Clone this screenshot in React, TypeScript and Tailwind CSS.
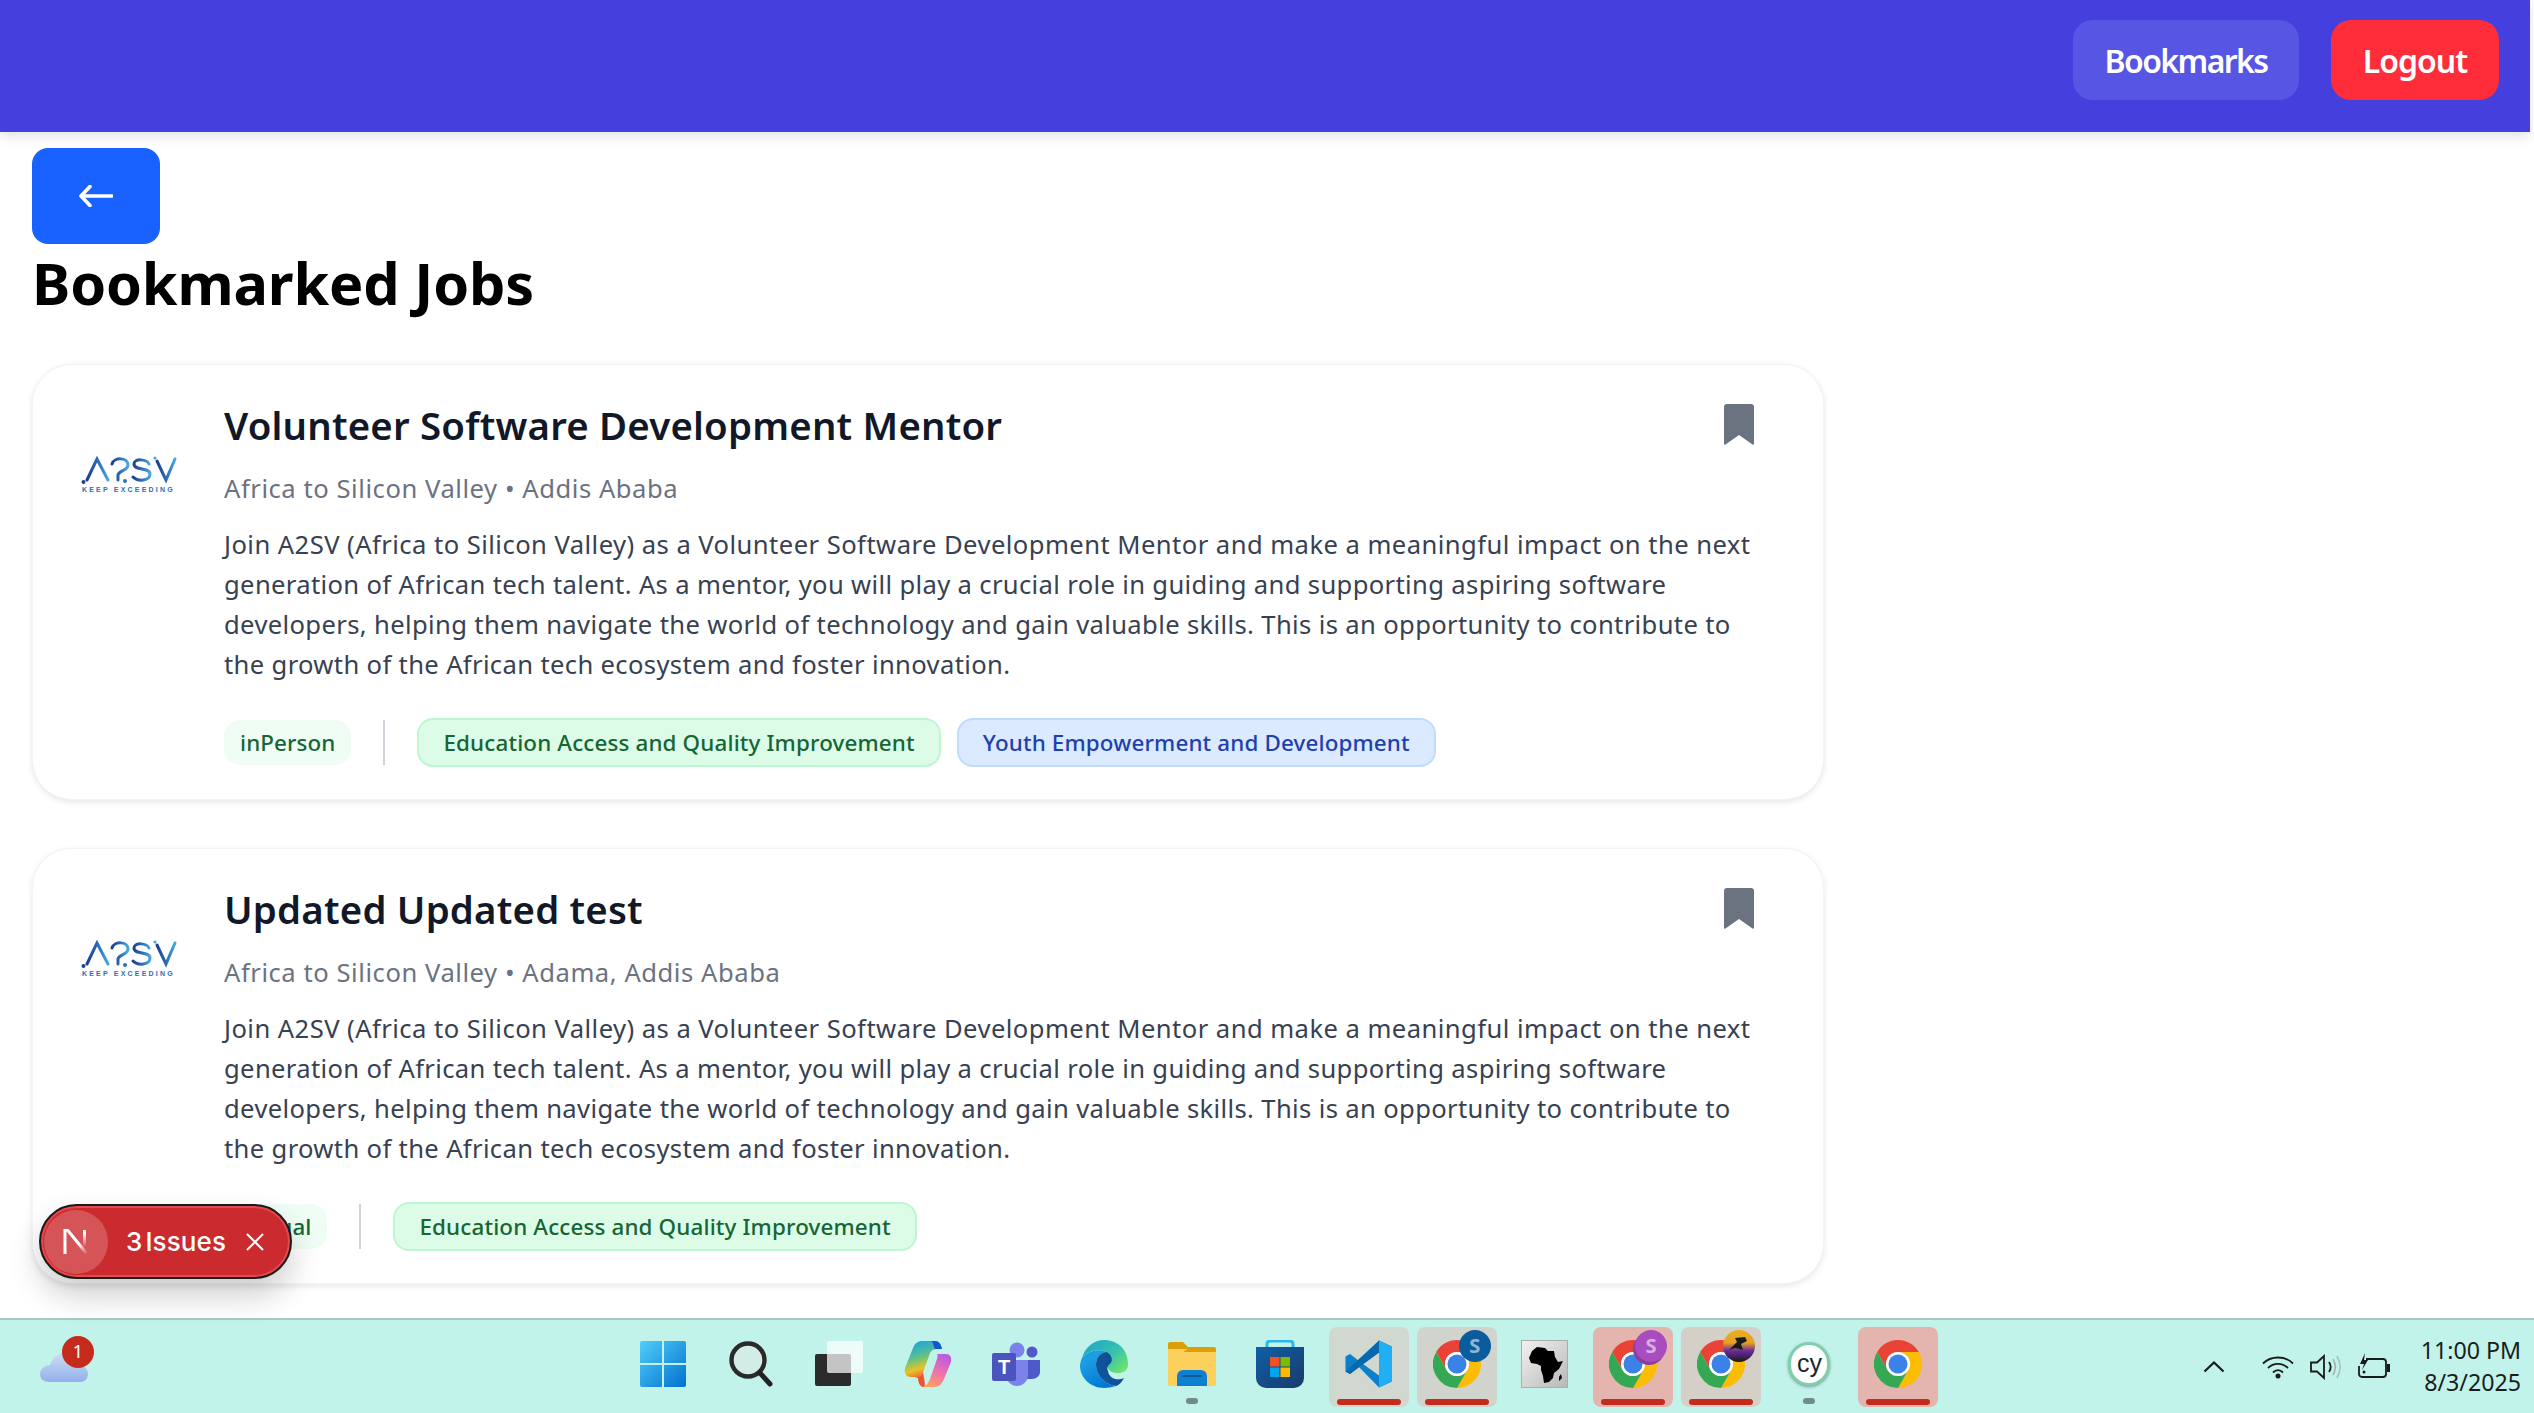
import React from "react";

const bodyLines = [
  { text: "Join A2SV (Africa to Silicon Valley) as a Volunteer Software Development Mentor and make a meaningful impact on the next", cls: "whitespace-nowrap tracking-[0.45px]" },
  { text: "generation of African tech talent. As a mentor, you will play a crucial role in guiding and supporting aspiring software", cls: "whitespace-nowrap tracking-[0.35px]" },
  { text: "developers, helping them navigate the world of technology and gain valuable skills. This is an opportunity to contribute to", cls: "whitespace-nowrap tracking-[0.36px]" },
  { text: "the growth of the African tech ecosystem and foster innovation.", cls: "whitespace-nowrap tracking-[0.35px]" },
];

function Logo({ id }: { id: string }) {
  return (
    <svg width="96" height="38" viewBox="0 0 96 38" aria-label="A2SV logo">
      <defs>
        <linearGradient id={id} x1="0" x2="1" y1="0" y2="0">
          <stop offset="0" stopColor="#1c3f8f" />
          <stop offset="0.55" stopColor="#2d6fb8" />
          <stop offset="1" stopColor="#45a8e4" />
        </linearGradient>
      </defs>
      <g fill="none" stroke={`url(#${id})`} strokeWidth="3" strokeLinecap="round">
        <path d="M6 24 L16 3 L27 24" />
        <path d="M31 8 C33 1 47 1 47 9 C47 15 38 14 37 19 L37 24" />
        <path d="M68 8 C66 3 53 2 53 8 C53 15 69 11 69 18 C69 25 57 26 52 21" />
        <path d="M76 5 L85 24 L94 3" />
      </g>
      <circle cx="2.5" cy="26" r="2" fill="#1c3f8f" />
      <circle cx="44" cy="25" r="2" fill="#2d6fb8" />
      <circle cx="74" cy="2" r="1.600" fill="#45a8e4" />
      <text x="1" y="36" fontSize="7" fontWeight="700" letterSpacing="1.4" fill="#2f6db5" fontFamily="Liberation Sans, sans-serif" textLength="92">KEEP EXCEEDING</text>
    </svg>
  );
}

function Bookmark() {
  return (
    <svg width="30" height="41" viewBox="0 0 30 41" className="mt-[3px] mr-[5px] shrink-0">
      <path d="M3 0h24A3 3 0 0 1 30 3V39.500A1 1 0 0 1 28.500 40.500L15 31 1.500 40.500A1 1 0 0 1 0 39.500V3A3 3 0 0 1 3 0Z" fill="#6b7280" />
    </svg>
  );
}

function Card({ id, title, meta, mode, tags }: { id: string; title: string; meta: string; mode: string; tags: { label: string; blue?: boolean }[] }) {
  return (
    <div className="flex rounded-[40px] border border-[#f3f4f6] bg-white pl-[32px] pr-[64px] pt-[36px] pb-[32px] shadow-[0_2px_6px_rgba(0,0,0,0.10)]">
      <div className="mt-[55px] flex h-[38px] w-[128px] shrink-0 justify-center">
        <Logo id={id} />
      </div>
      <div className="ml-[31px] min-w-0 flex-1">
        <div className="flex h-[50px] items-start justify-between">
          <h2 className="text-[38.4px] font-semibold leading-[48px] tracking-[0.19px] text-[#111827]">{title}</h2>
          <Bookmark />
        </div>
        <p className="mt-[19px] text-[25.6px] leading-[38px] tracking-[0.55px] text-[#6b7280]">{meta}</p>
        <div className="mt-[17px] text-[25.6px] leading-[40px] text-[#374151]">
          {bodyLines.map((l) => (
            <p key={l.text} className={l.cls}>{l.text}</p>
          ))}
        </div>
        <div className="mt-[33px] flex items-center">
          <span className="flex h-[45px] items-center rounded-[16px] bg-[#f0fdf4] px-[16px] text-[22.4px] font-medium tracking-[0.1px] text-[#166534]">{mode}</span>
          <span className="mx-[32px] h-[45px] w-[2px] bg-[#d1d5db]" />
          <div className="flex gap-[16px]">
            {tags.map((t) => (
              <span
                key={t.label}
                className={
                  t.blue
                    ? "flex h-[49px] items-center rounded-[16px] border-2 border-[#bfdbfe] bg-[#dbeafe] px-[24px] text-[22.4px] font-medium tracking-[0.15px] text-[#1e40af]"
                    : "flex h-[49px] items-center rounded-[16px] border-2 border-[#bbf7d0] bg-[#dcfce7] px-[24px] text-[22.4px] font-medium tracking-[0.15px] text-[#166534]"
                }
              >
                {t.label}
              </span>
            ))}
          </div>
        </div>
      </div>
    </div>
  );
}

function Chrome({ badge }: { badge?: React.ReactNode }) {
  return (
    <div className="relative h-[48px] w-[48px]">
      <svg width="48" height="48" viewBox="0 0 48 48">
        <path d="M24 0C15.100 0 7.400 4.800 3.200 12l10.400 18A12 12 0 0 1 24 12h20.800C40.600 4.800 32.900 0 24 0Z" fill="#ea4335" />
        <path d="M44.800 12H24a12 12 0 0 1 10.400 18L24 48c13.300 0 24-10.700 24-24 0-4.400-1.200-8.500-3.200-12Z" fill="#fbbc04" />
        <path d="M3.200 12A24 24 0 0 0 24 48L34.400 30A12 12 0 0 1 13.600 30Z" fill="#34a853" />
        <circle cx="24" cy="24" r="12" fill="#fff" />
        <circle cx="24" cy="24" r="9.500" fill="#3b82e8" />
      </svg>
      {badge}
    </div>
  );
}

function SBadge({ bg, ring }: { bg: string; ring?: boolean }) {
  return (
    <span
      className="absolute -right-[10px] -top-[10px] flex h-[32px] w-[32px] items-center justify-center rounded-full text-[20px] font-bold text-white/55"
      style={{ background: bg, boxShadow: ring ? "-2px 3px 0 #8a3ea0" : undefined }}
    >
      S
    </span>
  );
}

function Tile({ bg, bar, dot, children }: { bg?: string; bar?: boolean; dot?: boolean; children: React.ReactNode }) {
  return (
    <div className={`relative flex h-[80px] w-[80px] items-center justify-center rounded-[8px] ${bg ?? ""}`}>
      <div className="-mt-[6px] flex items-center justify-center">{children}</div>
      {bar && <span className="absolute bottom-[2px] left-[8px] h-[6px] w-[64px] rounded-full bg-[#c42b1c]" />}
      {dot && <span className="absolute bottom-[3px] left-[34px] h-[6px] w-[12px] rounded-full bg-[#6f8c86]" />}
    </div>
  );
}

const WinIcon = () => (
  <svg width="46" height="46" viewBox="0 0 46 46">
    <defs>
      <linearGradient id="win" x1="0" y1="0" x2="1" y2="1">
        <stop offset="0" stopColor="#52cdfc" />
        <stop offset="1" stopColor="#0272cd" />
      </linearGradient>
    </defs>
    <path d="M2 0H22V22H0V2A2 2 0 0 1 2 0ZM24 0H44A2 2 0 0 1 46 2V22H24ZM0 24H22V46H2A2 2 0 0 1 0 44ZM24 24H46V44A2 2 0 0 1 44 46H24Z" fill="url(#win)" />
  </svg>
);

const SearchIcon = () => (
  <svg width="44" height="46" viewBox="0 0 44 46">
    <circle cx="19" cy="19" r="16.500" fill="#d3ece7" stroke="#2a2a2a" strokeWidth="4.400" />
    <path d="M31 32 L41 43" stroke="#222" strokeWidth="5" strokeLinecap="round" />
  </svg>
);

const TaskViewIcon = () => (
  <svg width="48" height="46" viewBox="0 0 48 46">
    <rect x="0" y="13" width="36" height="32" rx="2" fill="#2b2b2b" />
    <rect x="12" y="0" width="36" height="32" rx="2" fill="#fff" fillOpacity="0.72" />
  </svg>
);

const CopilotIcon = () => (
  <svg width="48" height="46" viewBox="0 0 48 46">
    <defs>
      <linearGradient id="co1" x1="0" y1="0" x2="0.3" y2="1">
        <stop offset="0" stopColor="#0e9ef0" />
        <stop offset="0.5" stopColor="#5fc08a" />
        <stop offset="0.8" stopColor="#e8c520" />
        <stop offset="1" stopColor="#ee6a3a" />
      </linearGradient>
      <linearGradient id="co2" x1="0.7" y1="0" x2="0.3" y2="1">
        <stop offset="0" stopColor="#b85ce0" />
        <stop offset="0.5" stopColor="#ee70b0" />
        <stop offset="1" stopColor="#fba060" />
      </linearGradient>
    </defs>
    <path d="M18 0H31C35 0 37 3 38 8L33 8C28 8 26 11 25 15L18 34C17 37 14 38 11 36H7C2 36 0 32 1 27L9 7C11 2 14 0 18 0Z" fill="url(#co1)" />
    <path d="M31 0C35 0 37 3 38 8H31C29 5 30 2 27 0Z" fill="#1257d0" />
    <path d="M33 13H42C46 13 48 16 47 21L40 38C38 43 35 46 30 46H17C22 45 24 43 26 38L33 18C33.500 16 34 14 33 13Z" fill="url(#co2)" />
    <path d="M14 36C17 36 18 34 19 31C20 38 22 44 20 46C16 46 14 42 14 36Z" fill="#f0532c" />
  </svg>
);

const TeamsIcon = () => (
  <svg width="48" height="44" viewBox="0 0 48 44">
    <circle cx="25" cy="8" r="7.500" fill="#7b83eb" />
    <circle cx="40" cy="10" r="5.500" fill="#5059c9" />
    <path d="M33 18H48V30C48 34 44 37 40 37H33Z" fill="#5059c9" />
    <path d="M14 18H36V33C36 39 31 44 25 44C19 44 14 39 14 33Z" fill="#7b83eb" />
    <rect x="0" y="11" width="24" height="28" rx="2" fill="#4b53bc" />
    <text x="12" y="32" textAnchor="middle" fontSize="20" fontWeight="700" fill="#fff" fontFamily="Liberation Sans, sans-serif">T</text>
  </svg>
);

const EdgeIcon = () => (
  <svg width="48" height="48" viewBox="0 0 48 48">
    <defs>
      <linearGradient id="ed1" x1="0" y1="1" x2="1" y2="0">
        <stop offset="0" stopColor="#0c59a4" />
        <stop offset="1" stopColor="#114a8b" />
      </linearGradient>
      <linearGradient id="ed2" x1="0.2" y1="0.3" x2="0.6" y2="1">
        <stop offset="0" stopColor="#1b9de2" />
        <stop offset="1" stopColor="#0078d4" />
      </linearGradient>
      <linearGradient id="ed3" x1="0" y1="0" x2="1" y2="0.8">
        <stop offset="0" stopColor="#1ba5c8" />
        <stop offset="0.6" stopColor="#35c1b0" />
        <stop offset="1" stopColor="#6fe36a" />
      </linearGradient>
    </defs>
    <path d="M24 0C36 0 48 8 48 24C48 31 43 33 38 33C33 33 29 31 28 28C27 26 29 25 31 23C33 20 32 15 27 12C19 8 8 11 2 18C5 7 14 0 24 0Z" fill="url(#ed3)" />
    <path d="M2 18C8 11 19 8 27 12C21 12 16 17 16 25C16 34 23 44 36 46C32 47 28 48 24 48C10 48 0 37 0 26C0 23 1 20 2 18Z" fill="url(#ed2)" />
    <path d="M27 12C21 12 16 17 16 25C16 34 23 44 36 46C39 45 42 42 44 38C38 41 29 39 28 31C26 27 29 25 31 23C33 20 32 15 27 12Z" fill="url(#ed1)" />
  </svg>
);

const FolderIcon = () => (
  <svg width="48" height="44" viewBox="0 0 48 44">
    <path d="M2 0H15L20 5H46A2 2 0 0 1 48 7V12H0V2A2 2 0 0 1 2 0Z" fill="#dd9f08" />
    <path d="M0 7H20L15 10H48V42A2 2 0 0 1 46 44H2A2 2 0 0 1 0 42Z" fill="#fcd05c" />
    <path d="M9 44V34A6 6 0 0 1 15 28H33A6 6 0 0 1 39 34V44Z" fill="#0f7fd0" />
    <rect x="14" y="33" width="20" height="2" fill="#0a5a9c" />
  </svg>
);

const StoreIcon = () => (
  <svg width="48" height="48" viewBox="0 0 48 48">
    <defs>
      <linearGradient id="st" x1="0" y1="0" x2="1" y2="1">
        <stop offset="0" stopColor="#0f5fa6" />
        <stop offset="1" stopColor="#1a3a6a" />
      </linearGradient>
    </defs>
    <path d="M11 10V4A3 3 0 0 1 14 1H34A3 3 0 0 1 37 4V10" fill="none" stroke="#27b8ef" strokeWidth="3" />
    <path d="M0 7H48V38A10 10 0 0 1 38 48H10A10 10 0 0 1 0 38Z" fill="url(#st)" />
    <rect x="14" y="17" width="9.500" height="9.500" fill="#f25022" />
    <rect x="24.500" y="17" width="9.500" height="9.500" fill="#7fba00" />
    <rect x="14" y="27.500" width="9.500" height="9.500" fill="#00a4ef" />
    <rect x="24.500" y="27.500" width="9.500" height="9.500" fill="#ffb900" />
  </svg>
);

const VsCodeIcon = () => (
  <svg width="48" height="48" viewBox="0 0 48 48">
    <path d="M34 0.500L47 6.500V41.500L34 47.500L14 27L5 34L0.500 31.500V16.500L5 14L14 21Z" fill="#0a7fcb" />
    <path d="M34 12.500V35.500L18 24Z" fill="#d0d8d0" />
    <path d="M0.500 31.500L5 34L34 12.500V0.500Z" fill="#0668ad" />
    <path d="M34 0.500L47 6.500V41.500L34 47.500Z" fill="#22aef3" />
  </svg>
);

const AfricaIcon = () => (
  <svg width="47" height="48" viewBox="0 0 47 48">
    <defs>
      <linearGradient id="af" x1="0" y1="0" x2="1" y2="1">
        <stop offset="0" stopColor="#f2f2f2" />
        <stop offset="1" stopColor="#b8b8b8" />
      </linearGradient>
    </defs>
    <rect x="0.500" y="0.500" width="46" height="47" fill="url(#af)" stroke="#a9b0ac" />
    <path d="M16 7L24 8L27 11L33 11L34 17L37 22L42 21L38 29L33 33L32 38L28 42L23 43L22 36L20 30L20 26L16 24L10 23L8 18L11 11Z" fill="#000" />
    <path d="M40 34L41 38L38 41L38 37Z" fill="#000" />
  </svg>
);

const CyIcon = () => (
  <div className="flex h-[44px] w-[42px] items-center justify-center rounded-full border-[3px] border-[#7fcfab] bg-white font-['Liberation_Sans',sans-serif] text-[25px] leading-none text-[#1b2632] shadow-[0_1px_3px_rgba(0,0,0,0.35)]">
    cy
  </div>
);

function Taskbar() {
  return (
    <div className="flex h-[95px] shrink-0 items-center border-t-2 border-[#a9c9c0] bg-[#c1f3ea]">
      <div className="w-[619px] shrink-0 pl-[40px]">
        <div className="relative h-[30px] w-[48px]">
          <svg width="48" height="30" viewBox="0 0 48 30">
            <defs>
              <linearGradient id="cl" x1="0" y1="0" x2="0" y2="1">
                <stop offset="0" stopColor="#cfe0f5" />
                <stop offset="1" stopColor="#93b0ea" />
              </linearGradient>
            </defs>
            <path d="M10 30C4 30 0 27 0 22C0 17 5 13 10 13C13 5 19 0 26 0C33 0 38 5 38 13C44 13 48 17 48 22C48 27 44 30 40 30Z" fill="url(#cl)" />
          </svg>
          <span className="absolute -top-[16px] left-[22px] flex h-[32px] w-[32px] items-center justify-center rounded-full bg-[#c42b1c] font-['Noto_Sans',sans-serif] text-[18px] text-white">1</span>
        </div>
      </div>
      <div className="flex shrink-0 gap-[8.2px] pl-[4px]">
        <Tile><WinIcon /></Tile>
        <Tile><SearchIcon /></Tile>
        <Tile><TaskViewIcon /></Tile>
        <Tile><CopilotIcon /></Tile>
        <Tile><TeamsIcon /></Tile>
        <Tile><EdgeIcon /></Tile>
        <Tile dot><FolderIcon /></Tile>
        <Tile><StoreIcon /></Tile>
        <Tile bg="bg-[#d0d8d0]" bar><VsCodeIcon /></Tile>
        <Tile bg="bg-[#d0d4cc]" bar><Chrome badge={<SBadge bg="#0b5c9c" />} /></Tile>
        <Tile><AfricaIcon /></Tile>
        <Tile bg="bg-[#e4b5ae]" bar><Chrome badge={<SBadge bg="#a94cc0" ring />} /></Tile>
        <Tile bg="bg-[#d4d0c8]" bar>
          <Chrome
            badge={
              <span className="absolute -right-[10px] -top-[10px] h-[32px] w-[32px] overflow-hidden rounded-full bg-[linear-gradient(180deg,#e8b020_0%,#e8a020_40%,#6a2a9c_65%,#1a1a1a_100%)]">
                <svg width="32" height="32" viewBox="0 0 32 32">
                  <path d="M6 20L14 12L12 8L22 7L24 11L18 14L20 20L12 18Z" fill="#1a1a1a" />
                </svg>
              </span>
            }
          />
        </Tile>
        <Tile dot><CyIcon /></Tile>
        <Tile bg="bg-[#e4b5ae]" bar><Chrome /></Tile>
      </div>
      <div className="flex flex-1 items-center justify-end pr-[13px]">
        <svg width="22" height="12" viewBox="0 0 22 12" className="mr-[37px]">
          <path d="M1.500 10.500L11 1.500L20.500 10.500" fill="none" stroke="#1a1a1a" strokeWidth="2.200" />
        </svg>
        <svg width="32" height="24" viewBox="0 0 32 24" className="mr-[16px]">
          <g fill="none" stroke="#1a1a1a" strokeWidth="1.800">
            <path d="M1 8.500C9 0.500 23 0.500 31 8.500" />
            <path d="M6 13C11.500 7.500 20.500 7.500 26 13" />
            <path d="M11 17.500C14 14.500 18 14.500 21 17.500" />
          </g>
          <circle cx="16" cy="21" r="2.500" fill="#1a1a1a" />
        </svg>
        <svg width="32" height="26" viewBox="0 0 32 26" className="mr-[16px]">
          <path d="M1 8.500H7L14 2V24L7 17.500H1Z" fill="none" stroke="#1a1a1a" strokeWidth="1.800" />
          <path d="M19 8C21 11 21 15 19 18" fill="none" stroke="#1a1a1a" strokeWidth="1.800" />
          <path d="M23 5C26 10 26 16 23 21" fill="none" stroke="#9db5ae" strokeWidth="1.600" />
          <path d="M27 2C31 9 31 17 27 24" fill="none" stroke="#aac0b9" strokeWidth="1.600" />
        </svg>
        <svg width="32" height="28" viewBox="0 0 32 28" className="mr-[31px]">
          <path d="M8 6H25A3 3 0 0 1 28 9V21A3 3 0 0 1 25 24H4A3 3 0 0 1 1 21V13" fill="none" stroke="#1a1a1a" strokeWidth="1.800" />
          <path d="M29 11H32V19H29Z" fill="#1a1a1a" />
          <path d="M7 0L2 11H6L4 17L10 7H6Z" fill="#1a1a1a" />
          <circle cx="6" cy="19" r="1.500" fill="#1a1a1a" />
        </svg>
        <div className="mb-[2px] text-right font-['Noto_Sans',sans-serif] text-[23.2px] leading-[32px] text-[#1c1c1c]">
          <div>11:00 PM</div>
          <div>8/3/2025</div>
        </div>
      </div>
    </div>
  );
}

export default function App() {
  return (
    <div className="relative flex h-screen w-full flex-col overflow-hidden bg-white font-['Noto_Sans',sans-serif]">
      <div className="relative z-10 mr-[4px] flex h-[132px] shrink-0 justify-end gap-[32px] bg-[#4540dd] pr-[31px] pt-[20px] shadow-[0_4px_12px_rgba(0,0,0,0.12)]">
        <button className="h-[80px] w-[226px] rounded-[20px] bg-[#5755e3] pt-[2px] text-[32px] font-semibold tracking-[-1.6px] text-white">Bookmarks</button>
        <button className="h-[80px] w-[168px] rounded-[20px] bg-[#ff2d3a] pt-[2px] text-[32px] font-semibold tracking-[-1px] text-white">Logout</button>
      </div>
      <main className="min-h-0 flex-1 overflow-hidden pl-[32px] pr-[710px] pt-[16px]">
        <button className="flex h-[96px] w-[128px] items-center justify-center rounded-[16px] bg-[#1a62ff]">
          <svg width="34" height="22" viewBox="0 0 34 22">
            <path d="M33 11H3M11 1.500L2 11L11 20.500" fill="none" stroke="#fff" strokeWidth="3.600" strokeLinecap="round" strokeLinejoin="round" />
          </svg>
        </button>
        <h1 className="mt-[7px] h-[64px] text-[57.6px] font-bold leading-[64px] tracking-[-0.14px] text-black">Bookmarked Jobs</h1>
        <div className="mt-[49px] flex flex-col gap-[48px]">
          <Card
            id="lg1"
            title="Volunteer Software Development Mentor"
            meta="Africa to Silicon Valley • Addis Ababa"
            mode="inPerson"
            tags={[{ label: "Education Access and Quality Improvement" }, { label: "Youth Empowerment and Development", blue: true }]}
          />
          <Card
            id="lg2"
            title="Updated Updated test"
            meta="Africa to Silicon Valley • Adama, Addis Ababa"
            mode="Virtual"
            tags={[{ label: "Education Access and Quality Improvement" }]}
          />
        </div>
      </main>
      <Taskbar />
      <div className="absolute left-[39px] top-[1204px] z-20 flex h-[75px] w-[253px] items-center rounded-full border-2 border-[#1a1a1a] bg-[#cb2a2f] shadow-[inset_0_0_0_2px_#e5484d,0_16px_32px_rgba(0,0,0,0.2)] font-['Inter',sans-serif]">
        <span className="ml-[3px] flex h-[64px] w-[64px] shrink-0 items-center justify-center rounded-full bg-white/20">
          <svg width="26" height="26" viewBox="0 0 26 26" aria-label="Next.js">
            <defs>
              <linearGradient id="nx" gradientUnits="userSpaceOnUse" x1="2" y1="1" x2="24" y2="25">
                <stop offset="0.6" stopColor="#fff" />
                <stop offset="1" stopColor="#fff" stopOpacity="0" />
              </linearGradient>
              <linearGradient id="nx2" gradientUnits="userSpaceOnUse" x1="21" y1="1" x2="21" y2="18">
                <stop offset="0.2" stopColor="#fff" />
                <stop offset="1" stopColor="#fff" stopOpacity="0" />
              </linearGradient>
            </defs>
            <path d="M2 25V1H4.500L24 25" fill="none" stroke="url(#nx)" strokeWidth="3" />
            <path d="M21.500 1V18" fill="none" stroke="url(#nx2)" strokeWidth="3" />
          </svg>
        </span>
        <span className="ml-[18px] text-[26px] font-medium tracking-[0.1px] text-white [word-spacing:-4px]">3 Issues</span>
        <svg width="18" height="18" viewBox="0 0 18 18" className="ml-[20px]">
          <path d="M1 1L17 17M17 1L1 17" stroke="#fff" strokeWidth="2" />
        </svg>
      </div>
    </div>
  );
}
